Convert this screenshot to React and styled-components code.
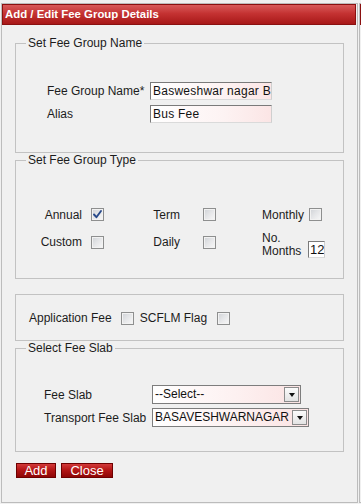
import React from 'react';
import styled, { createGlobalStyle } from 'styled-components';

const GlobalStyle = createGlobalStyle`
  html, body { margin: 0; padding: 0; background: #f0f0f0; overflow: hidden; }
  body { font-family: "Liberation Sans", Arial, sans-serif; font-size: 12px; color: #1c1c1c; }
  * { box-sizing: border-box; }
`;

const Page = styled.div`
  display: flex;
  align-items: flex-start;
  gap: 1px;
  padding: 3px 0 0 1px;
  width: 361px;
  overflow: hidden;
`;

const Panel = styled.div`
  flex: none;
  width: ${p => p.$w}px;
  height: 500px;
  border: 1px solid #bcbcbc;
  border-right-width: ${p => p.$open ? 0 : 1}px;
  background: #f0f0f0;
  display: flex;
  flex-direction: column;
`;

const TitleBar = styled.div`
  height: 21px;
  margin-right: ${p => p.$open ? 0 : 1}px;
  border: 1px solid #8a1010;
  border-right-width: ${p => p.$open ? 0 : 1}px;
  background: linear-gradient(to bottom, #d85a5a 0%, #c43232 45%, #a81818 100%);
  color: #fff;
  font-weight: bold;
  font-size: 11.4px;
  line-height: 19px;
  padding-left: 2px;
  white-space: nowrap;
  overflow: hidden;
`;

const Body = styled.div`
  padding-left: 13px;
  padding-top: 11px;
  display: flex;
  flex-direction: column;
`;

const Group = styled.fieldset`
  margin: ${p => p.$mt || 0}px 0 0 0;
  width: 329px;
  min-width: 0;
  border: 1px solid #c2c2c2;
  padding: ${p => p.$pt}px 0 ${p => p.$pb}px 0;
`;

const Legend = styled.legend`
  margin-left: 10px;
  padding: 0 2px;
  font-size: 12px;
  line-height: 14px;
`;

const NameGrid = styled.div`
  display: grid;
  grid-template-columns: 103px 122px;
  row-gap: 5px;
  margin-left: 31px;
  align-items: center;
`;

const Label = styled.span`
  font-size: 12px;
  line-height: 14px;
  white-space: nowrap;
  text-align: ${p => p.$align || 'left'};
  margin-top: ${p => p.$mt || 0}px;
`;

const TextInput = styled.input`
  width: ${p => p.$w}px;
  height: ${p => p.$h || 18}px;
  margin: 0;
  padding: 0 0 0 ${p => p.$pl ?? 2}px;
  border: 1px solid;
  border-color: #7a7a7a #cfcfcf #dadada #7a7a7a;
  background: ${p => p.$plain ? '#fff' : 'linear-gradient(to right, #ffffff 0%, #fdf3f3 60%, #fbe5e5 100%)'};
  font-family: "Liberation Sans", Arial, sans-serif;
  font-size: ${p => p.$fs || 12}px;
  letter-spacing: ${p => p.$ls || 0}px;
  color: #111;
  outline: none;
`;

const TypeGrid = styled.div`
  display: grid;
  grid-template-columns: 66px 22px 76px 82px 46px 30px;
  grid-template-rows: 14px 26px;
  row-gap: 10px;
  align-items: start;
`;

const CheckCell = styled.div`
  padding-left: ${p => p.$pl || 0}px;
  padding-top: ${p => p.$pt || 0}px;
  display: flex;
`;

const CheckBox = styled.span`
  display: inline-flex;
  align-items: center;
  justify-content: center;
  width: 13px;
  height: 13px;
  border: 1px solid #8e8f8f;
  background: linear-gradient(135deg, #cfd2d6 0%, #e6e7e9 50%, #f8f8f8 100%);
  box-shadow: inset 0 0 0 1px #f2f2f2;
  flex: none;
`;

const Check = ({ checked }) => (
  <CheckBox>
    {checked && (
      <svg width="11" height="11" viewBox="0 0 11 11">
        <path d="M2 5.5 L4.4 8.2 L9 2" fill="none" stroke="#27498a" strokeWidth="1.9" strokeLinecap="round" strokeLinejoin="round" />
      </svg>
    )}
  </CheckBox>
);

const MonthsCell = styled.div`
  align-self: end;
`;

const TwoLine = styled.span`
  display: block;
  font-size: 12px;
  line-height: 13px;
`;

const FlagRow = styled.div`
  display: flex;
  align-items: center;
  height: 14px;
  padding-left: 13px;
`;

const Gap = styled.span`
  display: inline-block;
  width: ${p => p.$w}px;
  flex: none;
`;

const SlabGrid = styled.div`
  display: grid;
  grid-template-columns: 108px auto;
  grid-template-rows: 19px 19px;
  row-gap: 4px;
  margin-left: 28px;
  align-items: center;
`;

const SelectBox = styled.div`
  display: flex;
  align-items: stretch;
  width: ${p => p.$w}px;
  height: 19px;
  border: 1px solid #7d7d7d;
  background: linear-gradient(to right, #ffffff 0%, #fdf1f1 55%, #fbe3e3 100%);
`;

const SelectText = styled.span`
  flex: 1;
  padding-left: 2px;
  font-size: 12px;
  line-height: 17px;
  white-space: nowrap;
  overflow: hidden;
  color: #111;
`;

const ArrowBtn = styled.span`
  flex: none;
  width: 15px;
  margin: 1px;
  border: 1px solid #8c8c8c;
  background: linear-gradient(to bottom, #fbfbfb 0%, #e3e3e3 100%);
  display: flex;
  align-items: center;
  justify-content: center;
`;

const Tri = styled.span`
  width: 0;
  height: 0;
  border-left: 3.5px solid transparent;
  border-right: 3.5px solid transparent;
  border-top: 4px solid #111;
  margin-top: 1px;
`;

const Select = ({ w, text }) => (
  <SelectBox $w={w}>
    <SelectText>{text}</SelectText>
    <ArrowBtn><Tri /></ArrowBtn>
  </SelectBox>
);

const ButtonRow = styled.div`
  display: flex;
  gap: 5px;
  margin-top: 11px;
  padding-left: 1px;
`;

const RedButton = styled.button`
  width: ${p => p.$w}px;
  height: 15px;
  margin: 0;
  padding: 0;
  border: 1px solid #6e0000;
  background: linear-gradient(to bottom, #d23a3a 0%, #b51616 45%, #8e0606 100%);
  color: #fff;
  font-family: "Liberation Sans", Arial, sans-serif;
  font-size: 13px;
  line-height: 13px;
  text-align: center;
  cursor: pointer;
`;

export default function App() {
  return (
    <>
      <GlobalStyle />
      <Page>
        <Panel $w={357}>
          <TitleBar>Add / Edit Fee Group Details</TitleBar>
          <Body>
            <Group $pt={32} $pb={29}>
              <Legend>Set Fee Group Name</Legend>
              <NameGrid>
                <Label>Fee Group Name*</Label>
                <TextInput $w={122} $ls={0.25} readOnly defaultValue="Basweshwar nagar Bus" />
                <Label>Alias</Label>
                <TextInput $w={122} $ls={0.25} readOnly defaultValue="Bus Fee" />
              </NameGrid>
            </Group>

            <Group $pt={41} $pb={20}>
              <Legend>Set Fee Group Type</Legend>
              <TypeGrid>
                <Label $align="right">Annual</Label>
                <CheckCell $pl={9}><Check checked /></CheckCell>
                <Label $align="right">Term</Label>
                <CheckCell $pl={23}><Check /></CheckCell>
                <Label>Monthly</Label>
                <CheckCell $pl={1}><Check /></CheckCell>

                <Label $align="right" $mt={3}>Custom</Label>
                <CheckCell $pl={9} $pt={4}><Check /></CheckCell>
                <Label $align="right" $mt={3}>Daily</Label>
                <CheckCell $pl={23} $pt={4}><Check /></CheckCell>
                <TwoLine>No.<br />Months</TwoLine>
                <MonthsCell>
                  <TextInput $w={17} $h={17} $pl={1} $fs={13} $plain readOnly defaultValue="12" />
                </MonthsCell>
              </TypeGrid>
            </Group>

            <Group $mt={15} $pt={16} $pb={15}>
              <FlagRow>
                <Label>Application Fee</Label>
                <Gap $w={9} />
                <Check />
                <Gap $w={6} />
                <Label>SCFLM Flag</Label>
                <Gap $w={10} />
                <Check />
              </FlagRow>
            </Group>

            <Group $pt={30} $pb={24}>
              <Legend>Select Fee Slab</Legend>
              <SlabGrid>
                <Label>Fee Slab</Label>
                <Select w={149} text="--Select--" />
                <Label>Transport Fee Slab</Label>
                <Select w={157} text="BASAVESHWARNAGAR" />
              </SlabGrid>
            </Group>

            <ButtonRow>
              <RedButton $w={40}>Add</RedButton>
              <RedButton $w={52}>Close</RedButton>
            </ButtonRow>
          </Body>
        </Panel>
        <Panel $w={2} $open>
          <TitleBar $open />
        </Panel>
      </Page>
    </>
  );
}
